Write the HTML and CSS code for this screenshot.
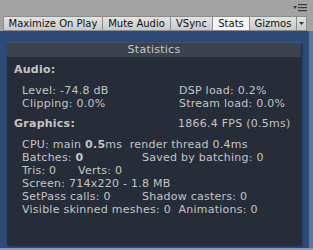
FILE: index.html
```html
<!DOCTYPE html>
<html lang="en">
<head>
  <meta charset="UTF-8">
  <title>Game View Stats</title>
  <link rel="stylesheet" href="styles.css">
</head>
<body>
  <div class="topbar">
    <svg class="menu-icon" width="14" height="8" viewBox="0 0 14 8">
      <path d="M0 2h4l-2 3z" fill="#3a3a3a"/>
      <rect x="5" y="0" width="9" height="1.2" fill="#3a3a3a"/>
      <rect x="5" y="3" width="9" height="1.2" fill="#3a3a3a"/>
      <rect x="5" y="6" width="9" height="1.2" fill="#3a3a3a"/>
    </svg>
  </div>

  <div class="toolbar">
    <span class="tab tab-max">Maximize On Play</span>
    <span class="tab tab-mute">Mute Audio</span>
    <span class="tab tab-vsync">VSync</span>
    <span class="tab tab-stats active">Stats</span>
    <span class="tab tab-gizmos">Gizmos</span>
    <span class="tab tab-drop">
      <svg width="5" height="3" viewBox="0 0 5 3"><path d="M0 0h5l-2.5 3z" fill="#333"/></svg>
    </span>
  </div>

  <div class="scene">
    <div class="panel">
      <div class="panel-title">Statistics</div>
      <div class="panel-body">
        <div class="section">
          <div class="heading">Audio:</div>
          <div class="rows">
            <div class="row cols-wide"><span>Level: -74.8 dB</span><span>DSP load: 0.2%</span></div>
            <div class="row cols-wide"><span>Clipping: 0.0%</span><span>Stream load: 0.0%</span></div>
          </div>
        </div>
        <div class="section">
          <div class="heading heading-fps"><span>Graphics:</span><span class="fps">1866.4 FPS (0.5ms)</span></div>
          <div class="rows">
            <div class="row"><span>CPU: main <b>0.5</b>ms&nbsp; render thread 0.4ms</span></div>
            <div class="row cols-mid"><span>Batches: <b>0</b></span><span>Saved by batching: 0</span></div>
            <div class="row cols-narrow"><span>Tris: 0</span><span>Verts: 0</span></div>
            <div class="row"><span>Screen: 714x220 - 1.8 MB</span></div>
            <div class="row cols-mid"><span>SetPass calls: 0</span><span>Shadow casters: 0</span></div>
            <div class="row"><span>Visible skinned meshes: 0&nbsp; Animations: 0</span></div>
          </div>
        </div>
      </div>
    </div>
  </div>
  <div class="bottom-line"></div>
</body>
</html>
```

FILE: styles.css
```css
body {
  margin: 0;
  width: 313px;
  height: 250px;
  overflow: hidden;
  background-color: #a3a3a3;
  font-family: "DejaVu Sans", Verdana, sans-serif;
}
.topbar {
  height: 16px;
  display: flex;
  justify-content: flex-end;
  align-items: flex-start;
  padding-right: 6px;
}
.menu-icon {
  margin-top: 4px;
}
.toolbar {
  height: 15px;
  display: flex;
  padding-left: 3px;
}
.tab {
  box-sizing: border-box;
  height: 15px;
  border: 1px solid #8c8c8c;
  border-left: none;
  background: linear-gradient(#e2e2e2, #cacaca);
  color: #111;
  font-size: 10px;
  line-height: 13px;
  text-align: center;
}
.tab-max {
  border-left: 1px solid #8c8c8c;
  width: 100px;
}
.tab-mute { width: 68px; }
.tab-vsync { width: 42px; }
.tab-stats { width: 37px; }
.tab-gizmos { width: 47px; }
.tab-drop {
  width: 10px;
  display: flex;
  align-items: center;
  justify-content: center;
}
.tab.active {
  background: #f4f4f4;
}
.scene {
  height: 217px;
  box-sizing: border-box;
  background-color: #2d4a79;
  padding: 11px 8px 0 7px;
  border-right: 4px solid #5f769c;
}
.panel {
  height: 203px;
  background-color: #262c38;
  box-shadow: 1px 1px 2px rgba(0, 0, 0, 0.5);
  color: #c5c5c5;
  font-size: 11px;
  letter-spacing: 0.25px;
}
.panel-title {
  height: 15px;
  background-color: #3a424f;
  border-top: 1px solid #4a5260;
  box-sizing: border-box;
  text-align: center;
  line-height: 14px;
  color: #c8c8c8;
}
.panel-body {
  padding: 6px 0 0 7px;
  display: flex;
  flex-direction: column;
  gap: 7px;
}
.heading {
  font-weight: bold;
  line-height: 13px;
}
.heading-fps {
  display: grid;
  grid-template-columns: 164px auto;
}
.heading-fps .fps {
  font-weight: normal;
}
.rows {
  padding-left: 8px;
  margin-top: 8px;
}
.row {
  line-height: 13px;
  white-space: nowrap;
}
.cols-wide {
  display: grid;
  grid-template-columns: 157px auto;
}
.cols-mid {
  display: grid;
  grid-template-columns: 120px auto;
}
.cols-narrow {
  display: grid;
  grid-template-columns: 56px auto;
}
.bottom-line {
  height: 2px;
  background-color: #8f9bb0;
}
```
